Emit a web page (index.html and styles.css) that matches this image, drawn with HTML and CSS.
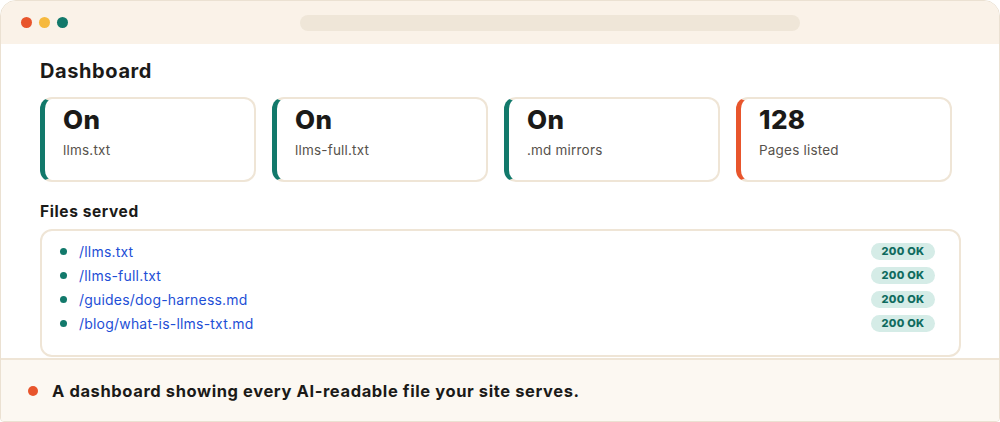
FILE: index.html
```html
<!DOCTYPE html>
<html lang="en">
<head>
    <meta charset="UTF-8">
    <meta name="viewport" content="width=device-width, initial-scale=1.0">
    <title>Dashboard</title>
    <link rel="stylesheet" href="styles.css">
</head>
<body>
    <div class="window">
        <!-- Browser chrome -->
        <div class="titlebar">
            <div class="dots">
                <span class="dot red"></span>
                <span class="dot yellow"></span>
                <span class="dot green"></span>
            </div>
            <div class="address"></div>
        </div>

        <div class="main">
            <h1>Dashboard</h1>
            <div class="stats">
                <div class="card">
                    <div class="value">On</div>
                    <div class="label">llms.txt</div>
                </div>
                <div class="card">
                    <div class="value">On</div>
                    <div class="label">llms-full.txt</div>
                </div>
                <div class="card">
                    <div class="value">On</div>
                    <div class="label">.md mirrors</div>
                </div>
                <div class="card accent">
                    <div class="value">128</div>
                    <div class="label">Pages listed</div>
                </div>
            </div>

            <h2>Files served</h2>
            <ul class="files">
                <li><span class="bullet"></span><a href="#">/llms.txt</a><span class="badge">200 OK</span></li>
                <li><span class="bullet"></span><a href="#">/llms-full.txt</a><span class="badge">200 OK</span></li>
                <li><span class="bullet"></span><a href="#">/guides/dog-harness.md</a><span class="badge">200 OK</span></li>
                <li><span class="bullet"></span><a href="#">/blog/what-is-llms-txt.md</a><span class="badge">200 OK</span></li>
            </ul>
        </div>

        <div class="caption">
            <span class="caption-dot"></span>
            A dashboard showing every AI-readable file your site serves.
        </div>
    </div>
</body>
</html>
```

FILE: styles.css
```css
* {
    box-sizing: border-box;
}
body {
    margin: 0;
    padding: 0;
    font-family: Inter, "Noto Sans", sans-serif;
    color: #1b1a18;
    background: #ffffff;
}
.window {
    height: 422px;
    width: 1000px;
    border: 1px solid #ebe1d2;
    border-radius: 16px 16px 4px 4px;
    overflow: hidden;
    display: flex;
    flex-direction: column;
    background: #ffffff;
}
.titlebar {
    height: 43px;
    flex: 0 0 43px;
    background: #faf2e8;
    display: grid;
    grid-template-columns: 299px 500px 1fr;
    align-items: center;
}
.dots {
    display: flex;
    gap: 7px;
    padding-left: 20px;
}
.dot {
    width: 11px;
    height: 11px;
    border-radius: 50%;
}
.red { background: #e8552c; }
.yellow { background: #f6b93e; }
.green { background: #12796b; }
.address {
    height: 16px;
    border-radius: 8px;
    background: #efe6d8;
}
.main {
    flex: 1;
    padding: 15px 40px 0 39px;
}
h1 {
    margin: 0;
    font-size: 20px;
    line-height: 24px;
    font-weight: 700;
    letter-spacing: 0.6px;
}
.stats {
    display: grid;
    grid-template-columns: repeat(4, 216px);
    gap: 16px;
    margin-top: 14px;
}
.card {
    height: 85px;
    border: 2px solid #efe5d6;
    border-left: 5px solid #12796b;
    border-radius: 12px;
    padding: 4px 16px 4px 18px;
}
.card.accent {
    border-left-color: #e8552c;
}
.value {
    font-size: 26px;
    line-height: 34px;
    font-weight: 800;
    letter-spacing: 0.4px;
}
.label {
    margin-top: 5px;
    font-size: 13.5px;
    color: #57524c;
    letter-spacing: 0.2px;
}
h2 {
    margin: 20px 0 0 0;
    font-size: 15.5px;
    line-height: 20px;
    font-weight: 700;
    letter-spacing: 0.6px;
}
.files {
    list-style: none;
    margin: 7px 0 0 0;
    width: 921px;
    height: 128px;
    border: 2px solid #efe5d6;
    border-radius: 12px;
    padding: 8px 24px 0 16px;
}
.files li {
    display: flex;
    align-items: center;
    height: 24px;
}
.bullet {
    width: 7px;
    height: 7px;
    border-radius: 50%;
    background: #12796b;
    margin-left: 2px;
    margin-right: 12px;
}
.files a {
    color: #1e4fd6;
    text-decoration: none;
    font-size: 14px;
    letter-spacing: 0.2px;
}
.badge {
    margin-left: auto;
    width: 64px;
    height: 17px;
    border-radius: 9px;
    background: #d5ece7;
    color: #0f6b5e;
    font-size: 11px;
    font-weight: 800;
    letter-spacing: 0.3px;
    display: flex;
    align-items: center;
    justify-content: center;
}
.caption {
    flex: 0 0 63px;
    border-top: 2px solid #efe5d6;
    background: #fcf8f2;
    display: flex;
    align-items: center;
    padding-left: 27px;
    font-size: 16.5px;
    font-weight: 700;
    letter-spacing: 0.6px;
}
.caption-dot {
    width: 10px;
    height: 10px;
    border-radius: 50%;
    background: #e8552c;
    margin-right: 14px;
}
```
